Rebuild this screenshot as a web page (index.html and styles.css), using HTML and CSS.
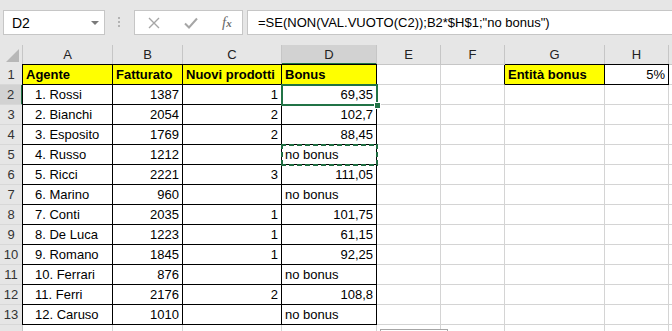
FILE: index.html
```html
<!DOCTYPE html>
<html lang="it">

<head>
    <meta charset="UTF-8">
    <title>Bonus agenti</title>
    <link rel="stylesheet" href="styles.css">
</head>

<body>
    <div class="app">
        <!-- Formula bar -->
        <div class="toolbar">
            <div class="namebox">
                <span>D2</span>
                <span class="caret"></span>
            </div>
            <div class="grip"><i></i><i></i><i></i></div>
            <div class="fbuttons">
                <svg width="12" height="12" viewBox="0 0 12 12"><path d="M1 1L11 11M11 1L1 11" stroke="#a6a6a6" stroke-width="1.4" fill="none"/></svg>
                <svg width="14" height="12" viewBox="0 0 14 12"><path d="M1 6.5L5 10.5L13 1.5" stroke="#a6a6a6" stroke-width="2" fill="none"/></svg>
                <span class="fx"><i>f</i><small>x</small></span>
            </div>
            <div class="formula">=SE(NON(VAL.VUOTO(C2));B2*$H$1;"no bonus")</div>
        </div>

        <!-- Sheet -->
        <div class="sheet">
            <div class="corner"><svg width="14" height="14" viewBox="0 0 14 14"><path d="M13 0L13 13L0 13Z" fill="#b7b7b7"/></svg></div>
            <div class="colhead">A</div>
            <div class="colhead">B</div>
            <div class="colhead">C</div>
            <div class="colhead sel">D</div>
            <div class="colhead">E</div>
            <div class="colhead">F</div>
            <div class="colhead">G</div>
            <div class="colhead">H</div>
            <div class="colhead"></div>

            <div class="rowhead">1</div>
            <div class="cell t first top hdr">Agente</div>
            <div class="cell t top hdr">Fatturato</div>
            <div class="cell t top hdr">Nuovi prodotti</div>
            <div class="cell t top hdr">Bonus</div>
            <div class="cell"></div>
            <div class="cell edge"></div>
            <div class="cell t top hdr">Entità bonus</div>
            <div class="cell t top num">5%</div>
            <div class="cell"></div>

            <div class="rowhead sel">2</div>
            <div class="cell t first ind">1. Rossi</div>
            <div class="cell t num">1387</div>
            <div class="cell t num">1</div>
            <div class="cell t num active">69,35<span class="frame"></span><span class="handle"></span></div>
            <div class="cell"></div><div class="cell"></div><div class="cell"></div><div class="cell"></div><div class="cell"></div>

            <div class="rowhead">3</div>
            <div class="cell t first ind">2. Bianchi</div>
            <div class="cell t num">2054</div>
            <div class="cell t num">2</div>
            <div class="cell t num">102,7</div>
            <div class="cell"></div><div class="cell"></div><div class="cell"></div><div class="cell"></div><div class="cell"></div>

            <div class="rowhead">4</div>
            <div class="cell t first ind">3. Esposito</div>
            <div class="cell t num">1769</div>
            <div class="cell t num">2</div>
            <div class="cell t num">88,45</div>
            <div class="cell"></div><div class="cell"></div><div class="cell"></div><div class="cell"></div><div class="cell"></div>

            <div class="rowhead">5</div>
            <div class="cell t first ind">4. Russo</div>
            <div class="cell t num">1212</div>
            <div class="cell t num"></div>
            <div class="cell t copied">no bonus<span class="ants"></span></div>
            <div class="cell"></div><div class="cell"></div><div class="cell"></div><div class="cell"></div><div class="cell"></div>

            <div class="rowhead">6</div>
            <div class="cell t first ind">5. Ricci</div>
            <div class="cell t num">2221</div>
            <div class="cell t num">3</div>
            <div class="cell t num">111,05</div>
            <div class="cell"></div><div class="cell"></div><div class="cell"></div><div class="cell"></div><div class="cell"></div>

            <div class="rowhead">7</div>
            <div class="cell t first ind">6. Marino</div>
            <div class="cell t num">960</div>
            <div class="cell t num"></div>
            <div class="cell t">no bonus</div>
            <div class="cell"></div><div class="cell"></div><div class="cell"></div><div class="cell"></div><div class="cell"></div>

            <div class="rowhead">8</div>
            <div class="cell t first ind">7. Conti</div>
            <div class="cell t num">2035</div>
            <div class="cell t num">1</div>
            <div class="cell t num">101,75</div>
            <div class="cell"></div><div class="cell"></div><div class="cell"></div><div class="cell"></div><div class="cell"></div>

            <div class="rowhead">9</div>
            <div class="cell t first ind">8. De Luca</div>
            <div class="cell t num">1223</div>
            <div class="cell t num">1</div>
            <div class="cell t num">61,15</div>
            <div class="cell"></div><div class="cell"></div><div class="cell"></div><div class="cell"></div><div class="cell"></div>

            <div class="rowhead">10</div>
            <div class="cell t first ind">9. Romano</div>
            <div class="cell t num">1845</div>
            <div class="cell t num">1</div>
            <div class="cell t num">92,25</div>
            <div class="cell"></div><div class="cell"></div><div class="cell"></div><div class="cell"></div><div class="cell"></div>

            <div class="rowhead">11</div>
            <div class="cell t first ind">10. Ferrari</div>
            <div class="cell t num">876</div>
            <div class="cell t num"></div>
            <div class="cell t">no bonus</div>
            <div class="cell"></div><div class="cell"></div><div class="cell"></div><div class="cell"></div><div class="cell"></div>

            <div class="rowhead">12</div>
            <div class="cell t first ind">11. Ferri</div>
            <div class="cell t num">2176</div>
            <div class="cell t num">2</div>
            <div class="cell t num">108,8</div>
            <div class="cell"></div><div class="cell"></div><div class="cell"></div><div class="cell"></div><div class="cell"></div>

            <div class="rowhead">13</div>
            <div class="cell t first ind">12. Caruso</div>
            <div class="cell t num">1010</div>
            <div class="cell t num"></div>
            <div class="cell t">no bonus</div>
            <div class="cell"></div><div class="cell"></div><div class="cell"></div><div class="cell"></div><div class="cell"></div>

            <!-- row 14, only its top edge is in view -->
            <div class="rowhead"></div>
            <div class="cell"></div><div class="cell"></div><div class="cell"></div><div class="cell"></div>
            <div class="cell"></div><div class="cell"></div><div class="cell"></div><div class="cell"></div><div class="cell"></div>
        </div>

        <!-- Paste options button -->
        <div class="paste"></div>
    </div>
</body>

</html>
```

FILE: styles.css
```css
/* General styles */
body {
    margin: 0;
    padding: 0;
    background: #fff;
    font-family: "Liberation Sans", Arial, sans-serif;
    font-size: 13px;
    color: #000;
    overflow: hidden;
}

.app {
    position: relative;
    width: 672px;
    height: 331px;
    overflow: hidden;
}

/* Formula bar */
.toolbar {
    height: 45px;
    background: #e6e6e6;
    display: flex;
    align-items: flex-start;
    padding: 10px 0 0 3px;
    box-sizing: border-box;
}

.namebox {
    width: 102px;
    height: 25px;
    box-sizing: border-box;
    background: #fff;
    border: 1px solid #c6c6c6;
    display: flex;
    align-items: center;
    justify-content: space-between;
    padding: 0 5px 0 8px;
    font-size: 14px;
}

.caret {
    width: 0;
    height: 0;
    border-left: 4px solid transparent;
    border-right: 4px solid transparent;
    border-top: 4px solid #7a7a7a;
}

.grip {
    width: 2px;
    margin: 7px 14px 0 13px;
    display: flex;
    flex-direction: column;
    gap: 2px;
}

.grip i {
    width: 2px;
    height: 2px;
    background: #b3b3b3;
}

.fbuttons {
    width: 109px;
    height: 25px;
    box-sizing: border-box;
    background: #fff;
    border: 1px solid #c6c6c6;
    display: flex;
    align-items: center;
    padding: 0 0 0 13px;
    gap: 24px;
}

.fx {
    font-family: "Liberation Serif", "Times New Roman", serif;
    color: #6b6b6b;
    font-size: 15px;
}

.fx small {
    font-style: italic;
    font-size: 11px;
    font-weight: bold;
}

.formula {
    flex: 1;
    height: 25px;
    box-sizing: border-box;
    background: #fff;
    border: 1px solid #c6c6c6;
    border-right: none;
    margin-left: 4px;
    padding-left: 10px;
    line-height: 23px;
    white-space: nowrap;
}

/* Grid */
.sheet {
    display: grid;
    grid-template-columns: 23px 90px 70px 99px 95px 64px 64px 100px 64px 1fr;
    grid-auto-rows: 20px;
}

.corner, .colhead, .rowhead, .cell {
    box-sizing: border-box;
    white-space: nowrap;
    overflow: hidden;
}

.corner {
    background: #e6e6e6;
    border-right: 1px solid #c6c6c6;
    display: flex;
    align-items: flex-end;
    justify-content: flex-end;
    padding: 0 2px 2px 0;
}

.colhead {
    background: #e6e6e6;
    border-right: 1px solid #c6c6c6;
    border-bottom: 1px solid #c6c6c6;
    text-align: center;
    line-height: 20px;
    color: #222;
}

.colhead.sel {
    background: #d2d2d2;
    border-bottom: 2px solid #217346;
}

.rowhead {
    background: #e6e6e6;
    border-right: 1px solid #c6c6c6;
    border-bottom: 1px solid #d8d8d8;
    text-align: center;
    line-height: 19px;
    color: #333;
}

.rowhead.sel {
    background: #d2d2d2;
    border-right: 2px solid #217346;
}

.cell {
    border-right: 1px solid #d4d4d4;
    border-bottom: 1px solid #d4d4d4;
    line-height: 19px;
    padding: 0 3px;
}

/* Table borders */
.cell.t {
    border-right-color: #000;
    border-bottom-color: #000;
}

.cell.edge {
    border-right-color: #000;
}

.cell.first {
    box-shadow: -1px 0 0 #000;
}

.cell.top {
    box-shadow: 0 -1px 0 #000;
}

.cell.first.top {
    box-shadow: -1px 0 0 #000, 0 -1px 0 #000, -1px -1px 0 #000;
}

.hdr {
    background: #ffff00;
    font-weight: bold;
}

.num {
    text-align: right;
}

.ind {
    padding-left: 12px;
}

/* Selection */
.active, .copied {
    position: relative;
    overflow: visible;
}

.frame {
    position: absolute;
    left: -1px;
    top: -1px;
    right: -2px;
    bottom: -2px;
    border: 2px solid #217346;
}

.handle {
    position: absolute;
    right: -5px;
    bottom: -5px;
    width: 5px;
    height: 5px;
    background: #217346;
    border: 1px solid #fff;
}

.ants {
    position: absolute;
    left: -1px;
    top: -1px;
    right: -2px;
    bottom: -2px;
    background:
        repeating-linear-gradient(90deg, #1e6b40 0 5px, transparent 5px 8px) top left / 100% 2px no-repeat,
        repeating-linear-gradient(90deg, #1e6b40 0 5px, transparent 5px 8px) bottom left / 100% 2px no-repeat,
        repeating-linear-gradient(180deg, #1e6b40 0 5px, transparent 5px 8px) top left / 2px 100% no-repeat,
        repeating-linear-gradient(180deg, #1e6b40 0 5px, transparent 5px 8px) top right / 2px 100% no-repeat;
}

.paste {
    position: absolute;
    left: 380px;
    top: 329px;
    width: 68px;
    height: 20px;
    box-sizing: border-box;
    border: 1px solid #a6a6a6;
    background: #fff;
}
```
